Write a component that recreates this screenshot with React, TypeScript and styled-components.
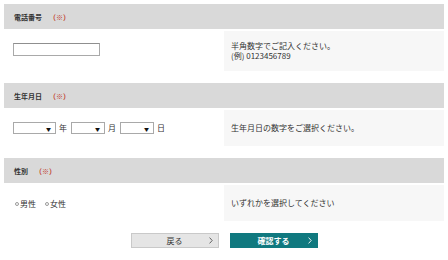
import React from 'react';
import styled, {createGlobalStyle} from 'styled-components';

const Global = createGlobalStyle`
  html, body {
    margin: 0;
    padding: 0;
    background: #fff;
  }
  body {
    font-family: "Noto Sans CJK JP", "Noto Sans", sans-serif;
    color: #333;
  }
`

const Page = styled.div`
  width: 440px;
  padding: 4px 4px 0;
`

const Section = styled.section`
  margin-bottom: 12px;
`

const Header = styled.div`
  height: 25px;
  display: flex;
  align-items: center;
  padding: 0 10px;
  background: #d9d9d9;
  font-size: 7px;
  font-weight: bold;
  color: #333;
`

const Mark = styled.span`
  margin-left: 7px;
  color: #c0392b;
`

const Body = styled.div`
  display: grid;
  grid-template-columns: 220px 220px;
`

const Field = styled.div`
  display: flex;
  align-items: center;
  align-self: start;
  padding: 14px 9px 0;
  font-size: 8px;
`

const Note = styled.div`
  margin-top: 2px;
  min-height: 36px;
  box-sizing: border-box;
  padding: 10px 7px;
  background: #f7f7f7;
  display: flex;
  flex-direction: column;
  justify-content: center;
  font-size: 8px;
  line-height: 10px;
  color: #333;
`

const TextInput = styled.input`
  width: 87px;
  height: 13px;
  box-sizing: border-box;
  margin: 0;
  border: 1px solid #a9a9a9;
  border-top-color: #8f8f8f;
  background: #fff;
  outline: none;
`

const SelectBox = styled.div<{ w: number }>`
  width: ${p => p.w}px;
  height: 12px;
  box-sizing: border-box;
  border: 1px solid #a9a9a9;
  background: #fff;
  display: flex;
  align-items: center;
  justify-content: flex-end;
  padding-right: 4px;
  font-size: 5px;
  color: #111;
`

const Unit = styled.span`
  margin: 0 4px 0 3px;
  line-height: 10px;
`

const Radio = styled.label`
  display: flex;
  align-items: center;
  gap: 1px;
  margin: 2px 7px 0 2px;
  line-height: 10px;
`

const Dot = styled.span`
  width: 4px;
  height: 4px;
  box-sizing: border-box;
  border: 1px solid #9a9a9a;
  border-radius: 50%;
  background: #fff;
`

const Actions = styled.div`
  display: flex;
  justify-content: center;
  gap: 11px;
  margin-top: 1px;
`

const Button = styled.button<{ primary?: boolean }>`
  width: 88px;
  height: 15px;
  box-sizing: border-box;
  margin: 0;
  padding: 0 5px;
  display: grid;
  grid-template-columns: 1fr auto 1fr;
  align-items: center;
  font-family: inherit;
  font-size: 8px;
  line-height: 10px;
  font-weight: ${p => (p.primary ? 'bold' : 'normal')};
  color: ${p => (p.primary ? '#fff' : '#333')};
  background: ${p => (p.primary ? '#10797f' : '#e5e5e5')};
  border: 1px solid ${p => (p.primary ? '#10797f' : '#c9c9c9')};
  border-radius: 0;
`

const Label = styled.span`
  grid-column: 2;
`

const Chevron = styled.svg`
  grid-column: 3;
  justify-self: end;
  width: 4px;
  height: 7px;
`

const Arrow = ({color}: { color: string }) => (
    <Chevron viewBox="0 0 4 7">
        <path d="M0.6 0.6 L3.2 3.5 L0.6 6.4" fill="none" stroke={color} strokeWidth="0.9"/>
    </Chevron>
)

export default function App() {
    return (
        <Page>
            <Global/>
            <Section>
                <Header>電話番号<Mark>（※）</Mark></Header>
                <Body>
                    <Field><TextInput type="text"/></Field>
                    <Note>
                        <div>半角数字でご記入ください。</div>
                        <div>(例) 0123456789</div>
                    </Note>
                </Body>
            </Section>
            <Section>
                <Header>生年月日<Mark>（※）</Mark></Header>
                <Body>
                    <Field>
                        <SelectBox w={43}>▼</SelectBox><Unit>年</Unit>
                        <SelectBox w={34}>▼</SelectBox><Unit>月</Unit>
                        <SelectBox w={34}>▼</SelectBox><Unit>日</Unit>
                    </Field>
                    <Note>生年月日の数字をご選択ください。</Note>
                </Body>
            </Section>
            <Section>
                <Header>性別<Mark>（※）</Mark></Header>
                <Body>
                    <Field>
                        <Radio><Dot/>男性</Radio>
                        <Radio><Dot/>女性</Radio>
                    </Field>
                    <Note>いずれかを選択してください</Note>
                </Body>
            </Section>
            <Actions>
                <Button><Label>戻る</Label><Arrow color="#555"/></Button>
                <Button primary><Label>確認する</Label><Arrow color="#fff"/></Button>
            </Actions>
        </Page>
    )
}
